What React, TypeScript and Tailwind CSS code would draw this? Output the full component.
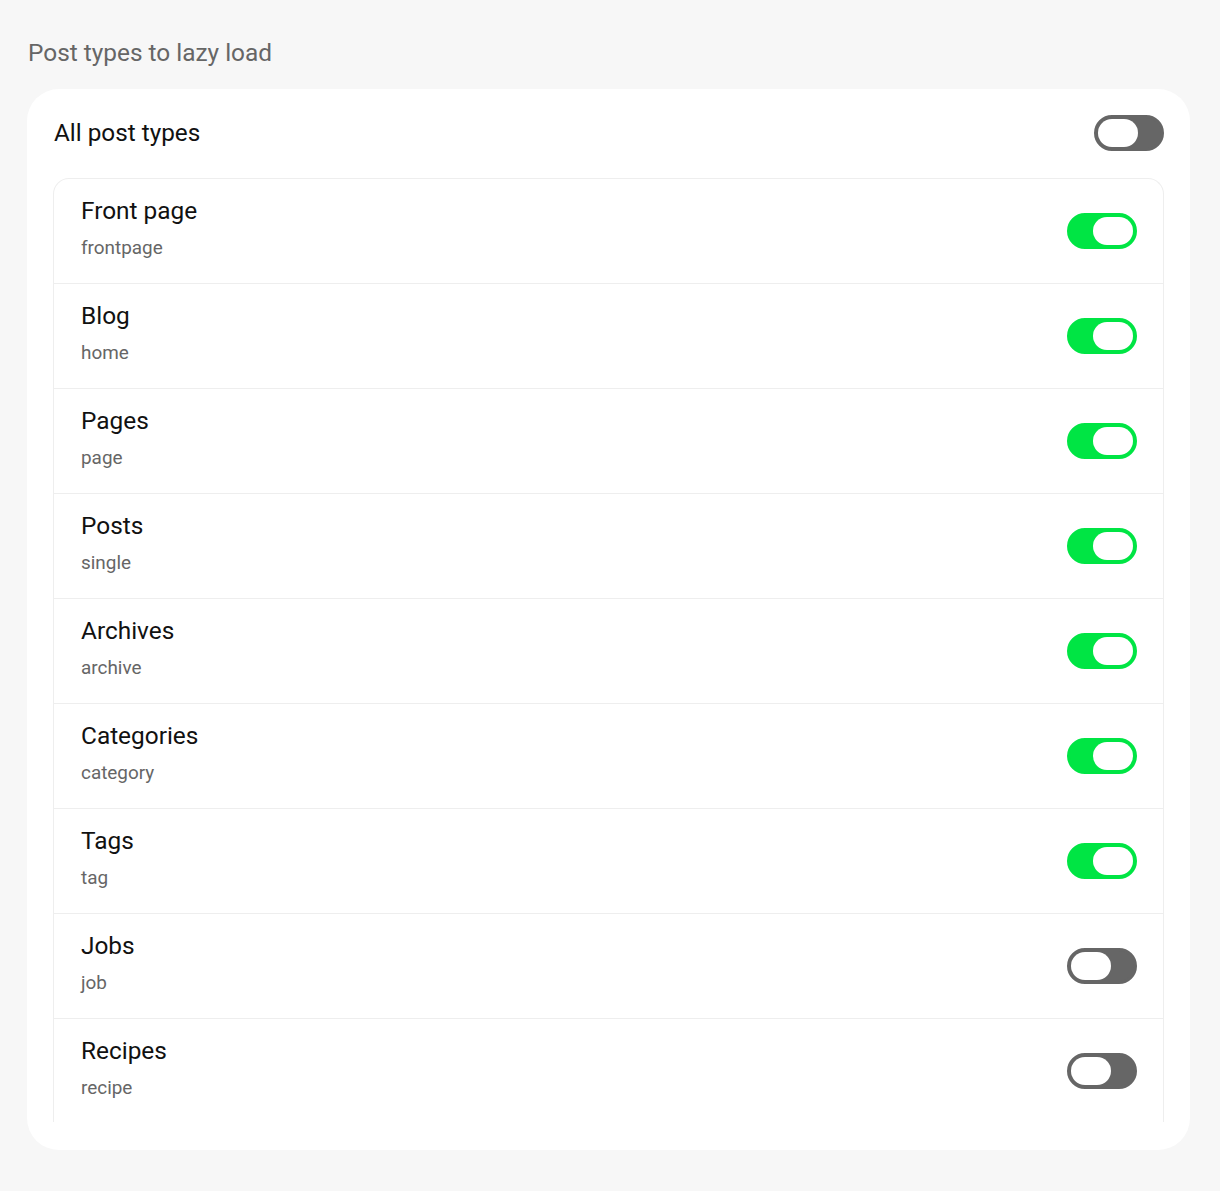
import React, { useState } from 'react'

type PostType = {
  label: string
  slug: string
  enabled: boolean
}

const initialTypes: PostType[] = [
  { label: 'Front page', slug: 'frontpage', enabled: true },
  { label: 'Blog', slug: 'home', enabled: true },
  { label: 'Pages', slug: 'page', enabled: true },
  { label: 'Posts', slug: 'single', enabled: true },
  { label: 'Archives', slug: 'archive', enabled: true },
  { label: 'Categories', slug: 'category', enabled: true },
  { label: 'Tags', slug: 'tag', enabled: true },
  { label: 'Jobs', slug: 'job', enabled: false },
  { label: 'Recipes', slug: 'recipe', enabled: false },
]

function Toggle({ on, onClick }: { on: boolean; onClick: () => void }) {
  return (
    <button
      type="button"
      onClick={onClick}
      className={`relative h-[36px] w-[70px] shrink-0 rounded-full border-[3px] ${
        on ? 'border-[#00e544] bg-[#00e544]' : 'border-[#666666] bg-[#666666]'
      }`}
    >
      <span
        className={`absolute top-[1px] h-[28px] w-[40px] rounded-full bg-white ${
          on ? 'right-[1px]' : 'left-[1px]'
        }`}
      />
    </button>
  )
}

export default function App() {
  const [types, setTypes] = useState(initialTypes)
  const [all, setAll] = useState(false)

  return (
    <main
      className="min-h-[1191px] bg-[#f7f7f7] pl-[27px] pr-[30px] pt-[37px] pb-[41px]"
      style={{ fontFamily: 'Roboto, "Noto Sans", sans-serif' }}
    >
      <h2 className="text-[24.4px] leading-[32px] text-[#666666] pl-[1px]">Post types to lazy load</h2>

      <div className="mt-[20px] rounded-[32px] bg-white px-[26px] pt-[26px] pb-[28px]">
        {/* Header */}
        <div className="flex items-center justify-between">
          <span className="text-[24.3px] leading-[32px] text-[#111111] pl-[1px]">All post types</span>
          <Toggle on={all} onClick={() => setAll(!all)} />
        </div>

        {/* List */}
        <div className="mt-[27px] h-[944px] overflow-hidden rounded-t-[16px] border-x border-t border-[#eeeeee]">
          {types.map((t, i) => (
            <div
              key={t.slug}
              className="flex h-[105px] items-center justify-between border-b border-[#eeeeee] pl-[27px] pr-[26px]"
            >
              <div className="-mt-[7px] flex flex-col">
                <span className="text-[24.4px] leading-[32px] text-[#111111]">{t.label}</span>
                <span className="mt-[9px] text-[18.9px] leading-[24px] text-[#666666]">{t.slug}</span>
              </div>
              <Toggle
                on={t.enabled}
                onClick={() =>
                  setTypes(types.map((x, j) => (j === i ? { ...x, enabled: !x.enabled } : x)))
                }
              />
            </div>
          ))}
        </div>
      </div>
    </main>
  )
}
